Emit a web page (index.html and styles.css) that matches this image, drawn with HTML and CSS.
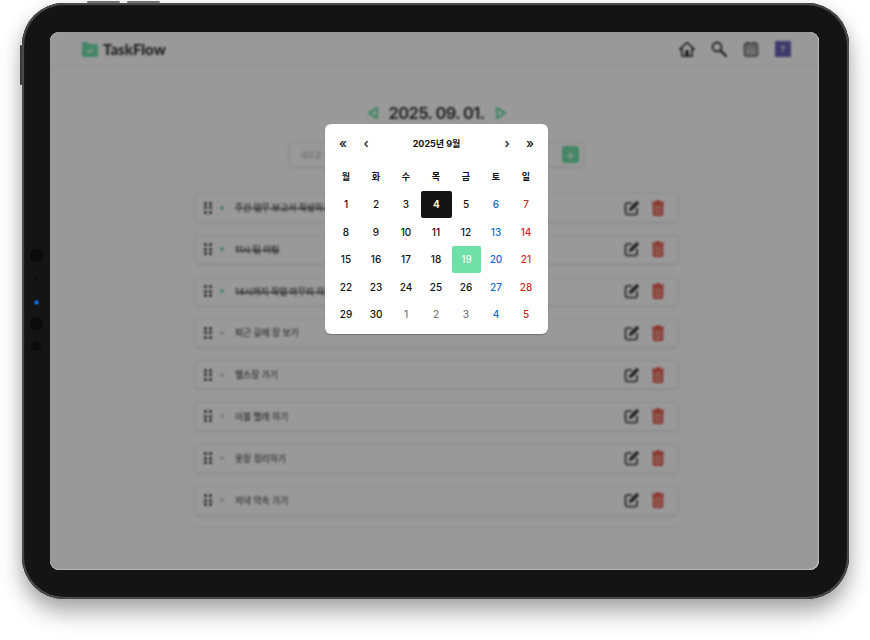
FILE: index.html
```html
<!DOCTYPE html>
<html lang="ko">
<head>
<meta charset="utf-8">
<title>TaskFlow</title>
<link rel="stylesheet" href="styles.css">
</head>
<body>
<div class="device">
  <span class="hw-btn hw-top1"></span>
  <span class="hw-btn hw-top2"></span>
  <span class="hw-btn hw-side"></span>
  <div class="sensors">
    <span class="lens lens-lg"></span>
    <span class="lens lens-dot"></span>
    <span class="lens lens-cam"></span>
    <span class="lens lens-lg2"></span>
    <span class="lens lens-md"></span>
  </div>
  <div class="screen">
    <div class="app">
      <header class="topbar">
        <div class="brand">
          <svg class="brand-icon" viewBox="0 0 16 16"><path d="M0 2.500A1.500 1.500 0 0 1 1.500 1h3.600a1 1 0 0 1 .8.4L7 3h7.500A1.500 1.500 0 0 1 16 4.500v10a1.500 1.500 0 0 1-1.500 1.500h-13A1.500 1.500 0 0 1 0 14.500z" fill="#72e0aa"/><path d="M5 9.200l2.200 2.200L11 7.800" fill="none" stroke="#fff" stroke-width="1.500"/></svg>
          <span class="brand-name">TaskFlow</span>
        </div>
        <nav class="nav">
          <svg class="nav-icon" viewBox="0 0 16 16"><path d="M8 1.500L.8 8.200h2.200V15h10V8.200h2.200z" fill="none" stroke="#222" stroke-width="1.500" stroke-linejoin="round"/><path d="M6.300 15v-4.500a1.700 1.700 0 0 1 3.400 0V15z" fill="#222"/></svg>
          <svg class="nav-icon" viewBox="0 0 16 16"><circle cx="6" cy="6" r="4.500" fill="none" stroke="#333" stroke-width="1.800"/><path d="M9.500 9.500L15 15" stroke="#333" stroke-width="2.400" stroke-linecap="round"/></svg>
          <svg class="nav-icon" viewBox="0 0 16 16"><rect x="1.500" y="2.200" width="13" height="12.800" rx="2" fill="#bbb" stroke="#555" stroke-width="1.400"/><path d="M1.500 6h13" stroke="#777" stroke-width="1"/><path d="M4.800 .8v3M11.200 .8v3" stroke="#555" stroke-width="1.400"/></svg>
          <span class="avatar">?</span>
        </nav>
      </header>
      <main class="content">
        <div class="date-row">
          <svg class="date-arrow" viewBox="0 0 12 14"><path d="M10 2v10L2 7z" fill="none" stroke="#72e0aa" stroke-width="2.200" stroke-linejoin="round"/></svg>
          <h1 class="date-title">2025. 09. 01.</h1>
          <svg class="date-arrow" viewBox="0 0 12 14"><path d="M2 2v10l8-5z" fill="none" stroke="#72e0aa" stroke-width="2.200" stroke-linejoin="round"/></svg>
        </div>
        <form class="add-form">
          <span class="add-placeholder">새로운 할 일을 입력하세요</span>
          <span class="add-btn">+</span>
        </form>
        <ul class="tasks">
          <li class="task"><span class="grip"><i></i><i></i><i></i><i></i><i></i><i></i></span><span class="dot dot-done"></span><span class="task-text task-done">주간 업무 보고서 작성하기</span><span class="actions"><svg class="act" viewBox="0 0 16 16"><use href="#edit"/></svg><svg class="act" viewBox="0 0 16 16"><use href="#trash"/></svg></span></li>
          <li class="task"><span class="grip"><i></i><i></i><i></i><i></i><i></i><i></i></span><span class="dot dot-done"></span><span class="task-text task-done">11시 팀 미팅</span><span class="actions"><svg class="act" viewBox="0 0 16 16"><use href="#edit"/></svg><svg class="act" viewBox="0 0 16 16"><use href="#trash"/></svg></span></li>
          <li class="task"><span class="grip"><i></i><i></i><i></i><i></i><i></i><i></i></span><span class="dot dot-done"></span><span class="task-text task-done">14시까지 작업 마무리 하기</span><span class="actions"><svg class="act" viewBox="0 0 16 16"><use href="#edit"/></svg><svg class="act" viewBox="0 0 16 16"><use href="#trash"/></svg></span></li>
          <li class="task"><span class="grip"><i></i><i></i><i></i><i></i><i></i><i></i></span><span class="dot"></span><span class="task-text">퇴근 길에 장 보기</span><span class="actions"><svg class="act" viewBox="0 0 16 16"><use href="#edit"/></svg><svg class="act" viewBox="0 0 16 16"><use href="#trash"/></svg></span></li>
          <li class="task"><span class="grip"><i></i><i></i><i></i><i></i><i></i><i></i></span><span class="dot"></span><span class="task-text">헬스장 가기</span><span class="actions"><svg class="act" viewBox="0 0 16 16"><use href="#edit"/></svg><svg class="act" viewBox="0 0 16 16"><use href="#trash"/></svg></span></li>
          <li class="task"><span class="grip"><i></i><i></i><i></i><i></i><i></i><i></i></span><span class="dot"></span><span class="task-text">이불 빨래 하기</span><span class="actions"><svg class="act" viewBox="0 0 16 16"><use href="#edit"/></svg><svg class="act" viewBox="0 0 16 16"><use href="#trash"/></svg></span></li>
          <li class="task"><span class="grip"><i></i><i></i><i></i><i></i><i></i><i></i></span><span class="dot"></span><span class="task-text">옷장 정리하기</span><span class="actions"><svg class="act" viewBox="0 0 16 16"><use href="#edit"/></svg><svg class="act" viewBox="0 0 16 16"><use href="#trash"/></svg></span></li>
          <li class="task"><span class="grip"><i></i><i></i><i></i><i></i><i></i><i></i></span><span class="dot"></span><span class="task-text">저녁 약속 가기</span><span class="actions"><svg class="act" viewBox="0 0 16 16"><use href="#edit"/></svg><svg class="act" viewBox="0 0 16 16"><use href="#trash"/></svg></span></li>
        </ul>
        <div class="list-end"></div>
      </main>
    </div>
    <div class="overlay"></div>
    <div class="calendar">
      <div class="cal-head">
        <span class="cal-nav">«</span>
        <span class="cal-nav">‹</span>
        <span class="cal-title">2025년 9월</span>
        <span class="cal-nav">›</span>
        <span class="cal-nav">»</span>
      </div>
      <div class="cal-week">
        <span>월</span><span>화</span><span>수</span><span>목</span><span>금</span><span>토</span><span>일</span>
      </div>
      <div class="cal-grid">
        <span class="day">1</span><span class="day">2</span><span class="day">3</span><span class="day day-now">4</span><span class="day">5</span><span class="day sat">6</span><span class="day sun">7</span>
        <span class="day">8</span><span class="day">9</span><span class="day">10</span><span class="day">11</span><span class="day">12</span><span class="day sat">13</span><span class="day sun">14</span>
        <span class="day">15</span><span class="day">16</span><span class="day">17</span><span class="day">18</span><span class="day day-sel">19</span><span class="day sat">20</span><span class="day sun">21</span>
        <span class="day">22</span><span class="day">23</span><span class="day">24</span><span class="day">25</span><span class="day">26</span><span class="day sat">27</span><span class="day sun">28</span>
        <span class="day">29</span><span class="day">30</span><span class="day other">1</span><span class="day other">2</span><span class="day other">3</span><span class="day sat">4</span><span class="day sun">5</span>
      </div>
    </div>
  </div>
</div>
<svg class="defs" aria-hidden="true">
  <symbol id="edit" viewBox="0 0 16 16">
    <path d="M8 3H3.200A1.700 1.700 0 0 0 1.500 4.700v8.100a1.700 1.700 0 0 0 1.700 1.700h8.100a1.700 1.700 0 0 0 1.700-1.700V8" fill="none" stroke="#333" stroke-width="1.600"/>
    <path d="M12.800 .8l2.400 2.400-7.300 7.300-3 .6.600-3z" fill="#333"/>
  </symbol>
  <symbol id="trash" viewBox="0 0 16 16">
    <path d="M6 .5h4l.6 1.200h3.400V3.500H2V1.700h3.400z" fill="#e53e2e"/>
    <path d="M2.800 4h10.400v10a2 2 0 0 1-2 2H4.800a2 2 0 0 1-2-2z" fill="#e53e2e"/>
    <rect x="4.300" y="5.500" width="7.400" height="9" rx="1" fill="#f4b3ac"/>
    <path d="M6.500 7v6M9.500 7v6" stroke="#e53e2e" stroke-width="1.200"/>
  </symbol>
</svg>
</body>
</html>
```
FILE: styles.css
```css
* { box-sizing: border-box; }
html, body { margin: 0; padding: 0; }
body {
  width: 870px;
  height: 640px;
  overflow: hidden;
  background: #fff;
  padding: 3px 0 0 22px;
  font-family: Inter, "Noto Sans CJK KR", sans-serif;
}
.defs { position: absolute; width: 0; height: 0; }

.device {
  position: relative;
  width: 827px;
  height: 596px;
  padding: 29px 30px 28px 28px;
  background: #141414;
  border-radius: 42px;
  box-shadow: inset 0 0 0 2px #4b4b4b, inset 0 0 0 3px #1a1a1a, 0 14px 22px rgba(0,0,0,.3), 0 3px 16px rgba(0,0,0,.1);
}
.hw-btn { position: absolute; background: #777; border-radius: 2px; }
.hw-top1 { left: 65px; top: -2px; width: 33px; height: 2px; }
.hw-top2 { left: 105px; top: -2px; width: 33px; height: 2px; }
.hw-side { left: -2px; top: 42px; width: 2px; height: 40px; background: #3a3a3a; }

.sensors {
  position: absolute;
  left: 7px;
  top: 245.500px;
  width: 14px;
  display: flex;
  flex-direction: column;
  align-items: center;
}
.lens { display: block; border-radius: 50%; background: #0b0b0b; }
.lens-lg { width: 13px; height: 13px; }
.lens-lg2 { width: 13px; height: 13px; margin-top: 11.500px; }
.lens-md { width: 10px; height: 10px; margin-top: 11px; }
.lens-dot { width: 3px; height: 3px; margin-top: 15px; }
.lens-cam { width: 7px; height: 7px; margin-top: 19px; background: radial-gradient(circle, #1b66c9 0 30%, #0a1626 55%, #333 100%); }

.screen {
  position: relative;
  width: 769px;
  height: 538px;
  overflow: hidden;
  background: #fff;
  border-radius: 9px;
}
.app {
  width: 100%;
  height: 100%;
  background: #fff;
  filter: blur(1.200px);
  color: #222;
}
.overlay {
  position: absolute;
  inset: 0;
  background: rgba(0,0,0,.4);
  border-radius: 9px;
  box-shadow: inset -1px -1px 0 rgba(255,255,255,.3);
}

.topbar {
  height: 35px;
  display: flex;
  align-items: center;
  justify-content: space-between;
  padding: 0 28px 0 32px;
  border-bottom: 1px solid #f0f0f0;
}
.brand { display: flex; align-items: center; gap: 5px; }
.brand-icon { width: 16px; height: 16px; display: block; }
.brand-name { font-family: Lato, sans-serif; font-weight: 900; font-size: 15px; color: #333; }
.nav { display: flex; align-items: center; gap: 16px; }
.nav-icon { width: 16px; height: 16px; display: block; }
.avatar {
  width: 16px;
  height: 16px;
  background: #6c63b5;
  color: #eee;
  font-size: 8px;
  font-weight: 700;
  display: flex;
  align-items: center;
  justify-content: center;
}

.content { display: flex; flex-direction: column; align-items: center; padding-top: 34px; }
.date-row { height: 24px; display: flex; align-items: center; gap: 10px; margin-left: 4px; }
.date-arrow { width: 12px; height: 16px; display: block; }
.date-title { margin: 0; width: 96px; white-space: nowrap; font-family: Inter, sans-serif; font-size: 16.500px; font-weight: 600; letter-spacing: -.6px; color: #333; }
.add-form {
  width: 295px;
  height: 25px;
  margin-top: 17px;
  margin-left: 4px;
  padding: 0 4px 0 10px;
  display: flex;
  align-items: center;
  justify-content: space-between;
  border: 1px solid #e9e9e9;
  border-radius: 3px;
  box-shadow: 0 1px 3px rgba(0,0,0,.08);
}
.add-placeholder { font-size: 8px; color: #aaa; }
.add-btn {
  width: 17px;
  height: 17px;
  background: #72e0aa;
  border-radius: 3px;
  color: #fff;
  font-size: 15px;
  line-height: 17px;
  text-align: center;
}
.tasks {
  list-style: none;
  margin: 26px 0 0 4px;
  padding: 0;
  width: 483px;
  display: flex;
  flex-direction: column;
  gap: 12.800px;
}
.task {
  height: 29px;
  display: flex;
  align-items: center;
  padding: 0 11px 0 8px;
  border: 1px solid #efefef;
  border-radius: 3px;
  box-shadow: 0 1px 3px rgba(0,0,0,.1);
}
.grip { width: 8px; display: grid; grid-template-columns: 3px 3px; gap: 1.500px 2px; margin-right: 8px; }
.grip i { width: 3px; height: 3px; border-radius: 50%; background: #333; }
.dot { width: 4px; height: 4px; border-radius: 50%; background: #ccc; margin-right: 11px; }
.dot-done { background: #72e0aa; }
.task-text { flex: 1; font-size: 8.800px; font-weight: 500; color: #555; }
.task-done { text-decoration: line-through; color: #444; }
.actions { display: flex; gap: 10px; }
.act { width: 16px; height: 16px; display: block; }
.list-end { width: 483px; margin: 12px 0 0 4px; border-top: 1px solid #eee; }

.calendar {
  position: absolute;
  left: 275px;
  top: 92px;
  width: 223px;
  height: 210px;
  padding: 6px 6px 0;
  background: #fff;
  border-radius: 6px;
  box-shadow: 0 1px 1px rgba(0,0,0,.25);
  color: #111;
}
.cal-head {
  height: 26px;
  display: grid;
  grid-template-columns: 24px 22px 1fr 22px 24px;
  align-items: center;
  text-align: center;
}
.cal-nav { font-size: 13px; font-weight: 500; line-height: 26px; }
.cal-title { font-size: 9px; font-weight: 700; }
.cal-week {
  margin: 8px 0 2.500px;
  height: 24px;
  display: grid;
  grid-template-columns: repeat(7, 30px);
  align-items: center;
  text-align: center;
  font-size: 9px;
  font-weight: 700;
}
.cal-grid {
  display: grid;
  grid-template-columns: repeat(7, 30px);
  grid-auto-rows: 27.500px;
  font-size: 10px;
  font-weight: 500;
}
.day { display: flex; align-items: center; justify-content: center; border-radius: 2px; }
.sat { color: #0a6ed1; }
.sun { color: #d1281f; }
.other { color: #777; }
.day-now { background: #141414; color: #fff6c8; font-weight: 700; margin-right: -1px; }
.day-sel { background: #6ee0a8; color: #f0fff6; margin-left: 1px; }
```
